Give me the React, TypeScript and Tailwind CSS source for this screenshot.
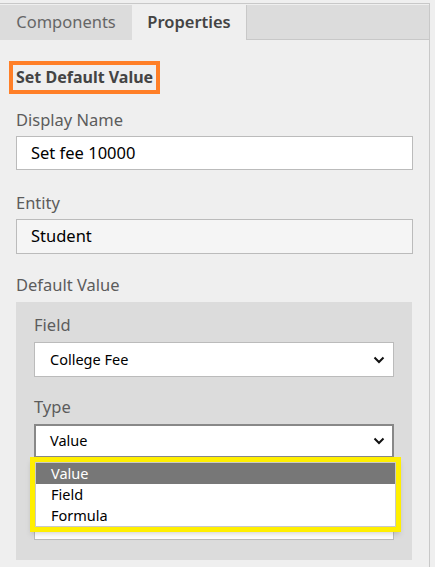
import React from "react";

const font = "font-['Segoe_UI','Noto_Sans','Open_Sans',sans-serif]";

function Chevron() {
  return (
    <svg width="12" height="8" viewBox="0 0 12 8" className="shrink-0">
      <path d="M1.5 1.5 L6 6 L10.5 1.5" fill="none" stroke="#111" strokeWidth="2" />
    </svg>
  );
}

function Label({ children, className = "" }: { children: React.ReactNode; className?: string }) {
  return (
    <div className={`h-[22px] pt-[2px] text-[16.5px] leading-[22px] text-[#5c5c5c] ${className}`}>
      {children}
    </div>
  );
}

export default function App() {
  return (
    <div className={`min-h-[567px] bg-[#efefef] pt-[3px] ${font}`}>
      <div className="w-[430px] min-h-[564px] border-t border-r border-[#c8c8c8] pt-px">
        {/* tabs */}
        <div className="flex h-[35px]">
          <div className="flex w-[132px] items-center justify-center bg-[#dcdcdc] text-[16.5px] text-[#666]">
            Components
          </div>
          <div className="flex w-[114px] items-center justify-center bg-[#efefef] text-[16.5px] font-semibold text-[#444]">
            Properties
          </div>
          <div className="flex-1 border-b border-l border-[#c8c8c8] bg-[#dcdcdc]" />
        </div>

        <div className="px-4">
          <div className="-ml-[7px] mt-[21px] inline-block border-4 border-[#ff7f27] px-[3px] text-[16px] font-bold leading-[25px] text-[#444]">
            Set Default Value
          </div>

          <Label className="mt-[13px]">Display Name</Label>
          <div className="mt-[7px] flex h-[34px] items-center border border-[#bbb] bg-white px-[14px] text-[16.5px] text-black">
            Set fee 10000
          </div>

          <Label className="mt-[20px]">Entity</Label>
          <div className="mt-[7px] flex h-[35px] items-center border border-[#bbb] bg-[#f5f5f5] px-[14px] text-[16.5px] text-black">
            Student
          </div>

          <Label className="mt-[18px]">Default Value</Label>

          <div className="mt-[8px] w-[396px] bg-[#dcdcdc] px-[18px] pb-[20px] pt-[10px]">
            <Label>Field</Label>
            <div className="mt-[8px] flex h-[35px] items-center justify-between border border-[#bbb] bg-white pl-[15px] pr-[8px] text-[14.5px] text-black">
              <span>College Fee</span>
              <Chevron />
            </div>

            <Label className="mt-[17px]">Type</Label>
            <div className="relative mt-[8px]">
              <div className="flex h-[34px] items-center justify-between border-2 border-[#888] bg-white pl-[14px] pr-[7px] text-[14.5px] text-black">
                <span>Value</span>
                <Chevron />
              </div>
              <div className="h-[82px] border border-t-0 border-[#bbb] bg-white" />
              <div className="absolute left-[-4px] top-[33px] w-[371px] border-[5px] border-[#ffef00] shadow-md">
                <div className="border border-[#c8c8c8] bg-white text-[14.5px] leading-[21px] text-black">
                  <div className="bg-[#777] pl-[15px] text-white">Value</div>
                  <div className="pl-[15px]">Field</div>
                  <div className="pl-[15px]">Formula</div>
                </div>
              </div>
            </div>
          </div>
        </div>
      </div>
    </div>
  );
}
